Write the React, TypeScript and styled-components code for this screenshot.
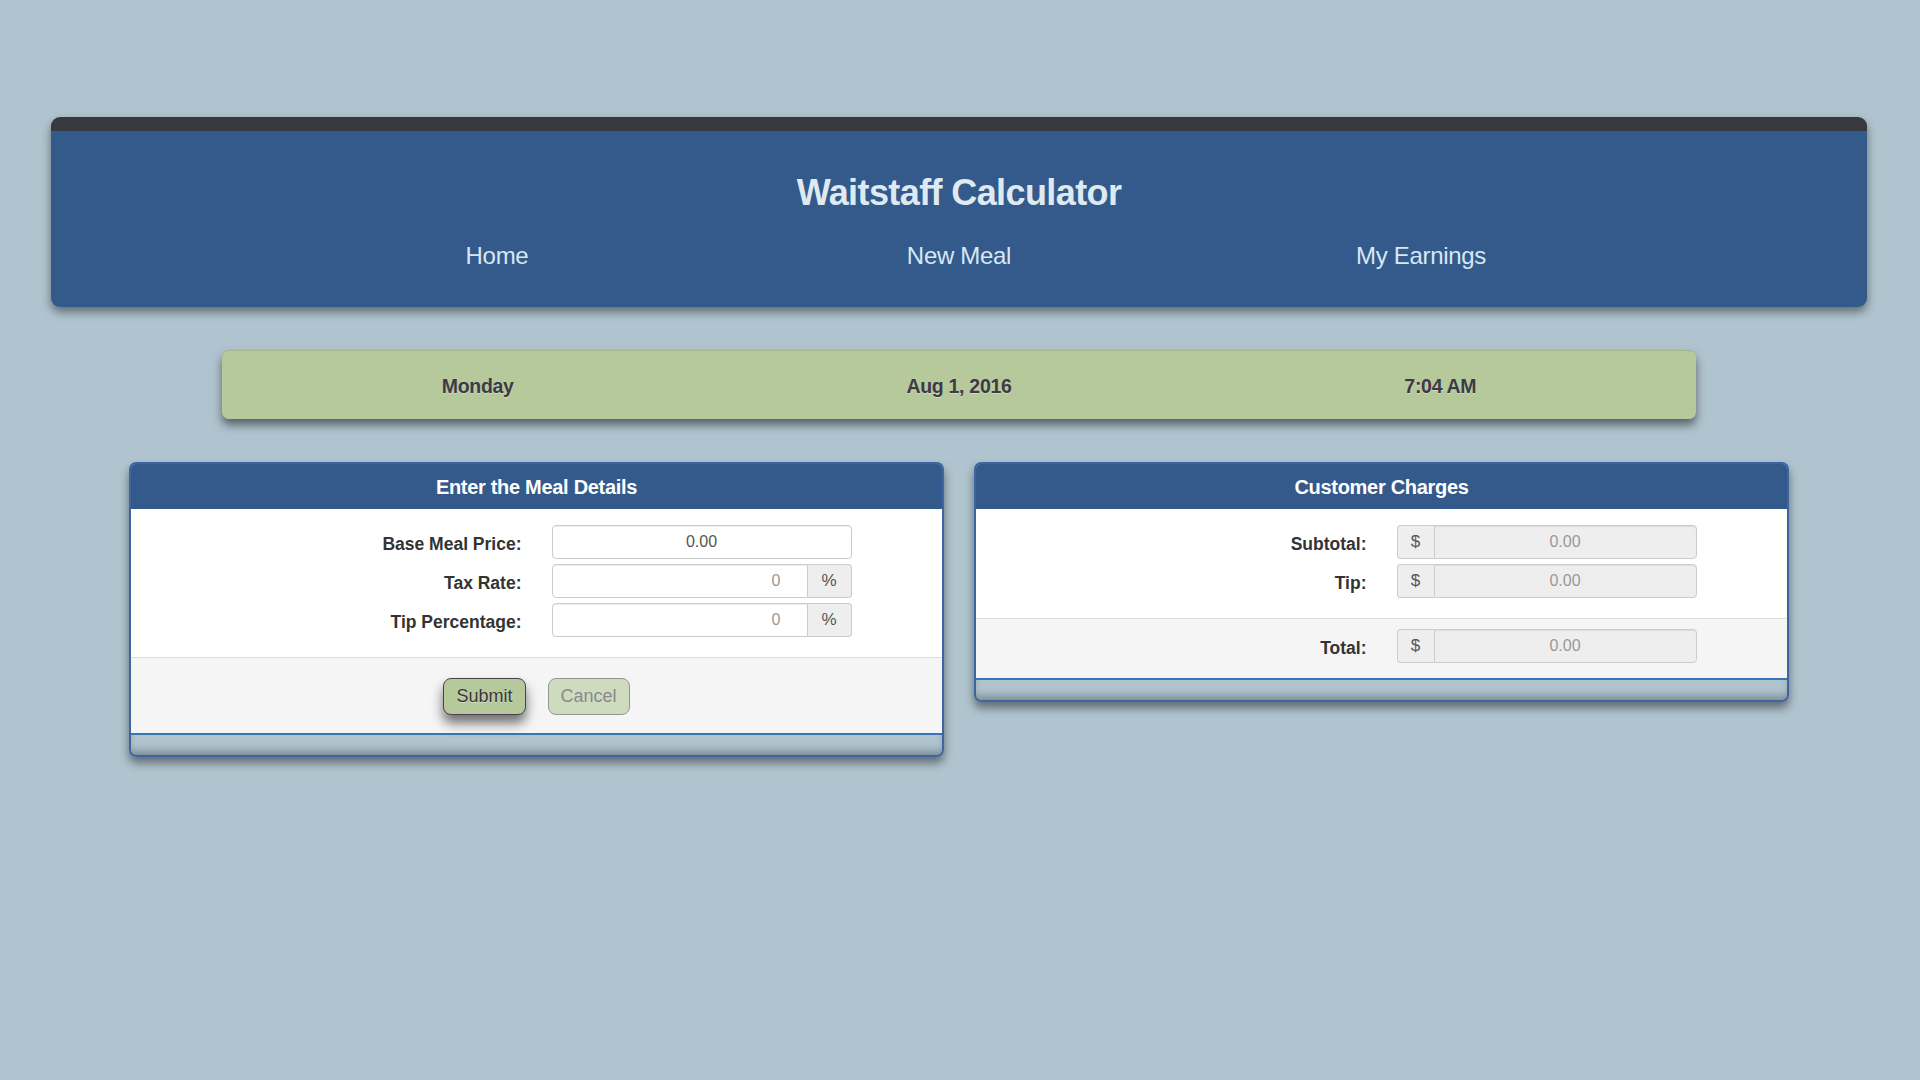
import React from "react";
import styled, { createGlobalStyle } from "styled-components";

const GlobalStyle = createGlobalStyle`
  html, body {
    margin: 0;
    padding: 0;
    background: #b0c4cf;
    font-family: "Liberation Sans", Arial, Helvetica, sans-serif;
    color: #333;
  }
  * { box-sizing: border-box; }
`;

const Page = styled.div`
  min-height: 1080px;
  padding: 117px 53px 40px 51px;
  display: flex;
  flex-direction: column;
  align-items: center;
`;

const Header = styled.header`
  width: 100%;
  background: #345a8b;
  border-top: 14px solid #363a40;
  border-radius: 9px;
  box-shadow: 0 5px 10px rgba(0, 0, 0, 0.45);
  padding: 42px 0 34px;
  display: flex;
  flex-direction: column;
  align-items: center;
`;

const Title = styled.h1`
  margin: 0;
  font-size: 36px;
  line-height: 40px;
  font-weight: bold;
  letter-spacing: -0.6px;
  color: #dfe9f1;
`;

const Nav = styled.nav`
  width: 1386px;
  margin-top: 26px;
  display: grid;
  grid-template-columns: repeat(3, 1fr);
`;

const NavLink = styled.a`
  text-align: center;
  font-size: 24px;
  line-height: 34px;
  letter-spacing: -0.3px;
  color: #d6e8f3;
  text-decoration: none;
`;

const DateBar = styled.div`
  width: 1474px;
  height: 69px;
  margin-top: 43px;
  padding: 2px 15px 0;
  background: #b5c99b;
  border-radius: 7px;
  border-top: 1px solid #a4b58c;
  box-shadow: 0 6px 10px rgba(0, 0, 0, 0.5);
  display: grid;
  grid-template-columns: repeat(3, 1fr);
  align-items: center;
`;

const DateItem = styled.div`
  text-align: center;
  font-size: 19.5px;
  font-weight: bold;
  letter-spacing: -0.3px;
  color: #3e3946;
  text-shadow: 0 1px 0 rgba(255, 255, 255, 0.35);
`;

const Panels = styled.div`
  margin-top: 43px;
  width: 1660px;
  display: grid;
  grid-template-columns: 1fr 1fr;
  gap: 30px;
  align-items: start;
`;

const Panel = styled.section`
  border: 2px solid #3c65a2;
  border-radius: 7px;
  overflow: hidden;
  box-shadow: 0 6px 10px rgba(0, 0, 0, 0.45);
  display: flex;
  flex-direction: column;
`;

const PanelHeading = styled.h3`
  margin: 0;
  padding: 11px 15px 10px;
  background: #345a8b;
  color: #ffffff;
  font-size: 20px;
  line-height: 24px;
  font-weight: bold;
  letter-spacing: -0.3px;
  text-align: center;
`;

const PanelBody = styled.div`
  background: #ffffff;
  padding: 16px 0 15px;
`;

const PanelFooter = styled.div<{ $buttons?: boolean }>`
  background: #f5f5f5;
  border-top: 1px solid #dddddd;
  border-bottom: 2px solid #3576bb;
  padding: ${(p) => (p.$buttons ? "20px 15px 18px" : "10px 0 10px")};
  ${(p) =>
    p.$buttons
      ? `display: flex; justify-content: center; gap: 22px;`
      : ""}
`;

const PanelTail = styled.div`
  height: 20px;
  box-shadow: inset 0 -7px 8px -3px rgba(0, 0, 0, 0.3);
`;

const FormRow = styled.div`
  display: grid;
  grid-template-columns: 1fr 1fr;
  align-items: center;
  margin-bottom: 5px;
`;

const Label = styled.label`
  text-align: right;
  padding-right: 15px;
  padding-top: 4px;
  font-size: 17.5px;
  font-weight: bold;
  color: #333;
`;

const InputGroup = styled.div`
  margin-left: 15px;
  width: 300px;
  height: 34px;
  display: flex;
`;

const TextInput = styled.input<{ $align: "center" | "right"; $grouped?: "left" | "right"; $readonly?: boolean }>`
  flex: 1;
  min-width: 0;
  height: 34px;
  border: 1px solid #cccccc;
  border-radius: ${(p) =>
    p.$grouped === "left" ? "0 4px 4px 0" : p.$grouped === "right" ? "4px 0 0 4px" : "4px"};
  background: ${(p) => (p.$readonly ? "#eeeeee" : "#ffffff")};
  box-shadow: inset 0 1px 1px rgba(0, 0, 0, 0.075);
  font-family: "Liberation Sans", Arial, sans-serif;
  font-size: 16px;
  color: ${(p) => (p.$readonly ? "#999999" : "#555555")};
  text-align: ${(p) => p.$align};
  padding: ${(p) => (p.$align === "right" ? "0 26px 0 12px" : "0 12px")};
  outline: none;
  &::placeholder {
    color: #999999;
  }
`;

const Addon = styled.span<{ $side: "left" | "right" }>`
  width: ${(p) => (p.$side === "left" ? "37px" : "44px")};
  display: flex;
  align-items: center;
  justify-content: center;
  background: #eeeeee;
  border: 1px solid #cccccc;
  ${(p) => (p.$side === "left" ? "border-right: 0;" : "border-left: 0;")}
  border-radius: ${(p) => (p.$side === "left" ? "4px 0 0 4px" : "0 4px 4px 0")};
  font-size: 17px;
  color: #555555;
`;

const Button = styled.button<{ $primary?: boolean }>`
  height: 37px;
  padding: 0 12px;
  border-radius: 8px;
  font-family: "Liberation Sans", Arial, sans-serif;
  font-size: 18px;
  cursor: pointer;
  background: ${(p) => (p.$primary ? "#b6c99b" : "#cfdbbf")};
  border: 1px solid ${(p) => (p.$primary ? "#4b4150" : "#959595")};
  color: ${(p) => (p.$primary ? "#3b3541" : "#8a8790")};
  box-shadow: ${(p) => (p.$primary ? "0 8px 12px rgba(0, 0, 0, 0.55)" : "none")};
  text-shadow: ${(p) => (p.$primary ? "0 1px 0 rgba(255,255,255,0.4)" : "none")};
`;

export default function App() {
  return (
    <>
      <GlobalStyle />
      <Page>
        <Header>
          <Title>Waitstaff Calculator</Title>
          <Nav>
            <NavLink href="#">Home</NavLink>
            <NavLink href="#">New Meal</NavLink>
            <NavLink href="#">My Earnings</NavLink>
          </Nav>
        </Header>

        <DateBar>
          <DateItem>Monday</DateItem>
          <DateItem>Aug 1, 2016</DateItem>
          <DateItem>7:04 AM</DateItem>
        </DateBar>

        <Panels>
          <Panel>
            <PanelHeading>Enter the Meal Details</PanelHeading>
            <PanelBody>
              <FormRow>
                <Label>Base Meal Price:</Label>
                <InputGroup>
                  <TextInput $align="center" defaultValue="0.00" />
                </InputGroup>
              </FormRow>
              <FormRow>
                <Label>Tax Rate:</Label>
                <InputGroup>
                  <TextInput $align="right" $grouped="right" placeholder="0" />
                  <Addon $side="right">%</Addon>
                </InputGroup>
              </FormRow>
              <FormRow>
                <Label>Tip Percentage:</Label>
                <InputGroup>
                  <TextInput $align="right" $grouped="right" placeholder="0" />
                  <Addon $side="right">%</Addon>
                </InputGroup>
              </FormRow>
            </PanelBody>
            <PanelFooter $buttons>
              <Button $primary>Submit</Button>
              <Button>Cancel</Button>
            </PanelFooter>
            <PanelTail />
          </Panel>

          <Panel>
            <PanelHeading>Customer Charges</PanelHeading>
            <PanelBody>
              <FormRow>
                <Label>Subtotal:</Label>
                <InputGroup>
                  <Addon $side="left">$</Addon>
                  <TextInput $align="center" $grouped="left" $readonly readOnly value="0.00" />
                </InputGroup>
              </FormRow>
              <FormRow>
                <Label>Tip:</Label>
                <InputGroup>
                  <Addon $side="left">$</Addon>
                  <TextInput $align="center" $grouped="left" $readonly readOnly value="0.00" />
                </InputGroup>
              </FormRow>
            </PanelBody>
            <PanelFooter>
              <FormRow>
                <Label>Total:</Label>
                <InputGroup>
                  <Addon $side="left">$</Addon>
                  <TextInput $align="center" $grouped="left" $readonly readOnly value="0.00" />
                </InputGroup>
              </FormRow>
            </PanelFooter>
            <PanelTail />
          </Panel>
        </Panels>
      </Page>
    </>
  );
}
